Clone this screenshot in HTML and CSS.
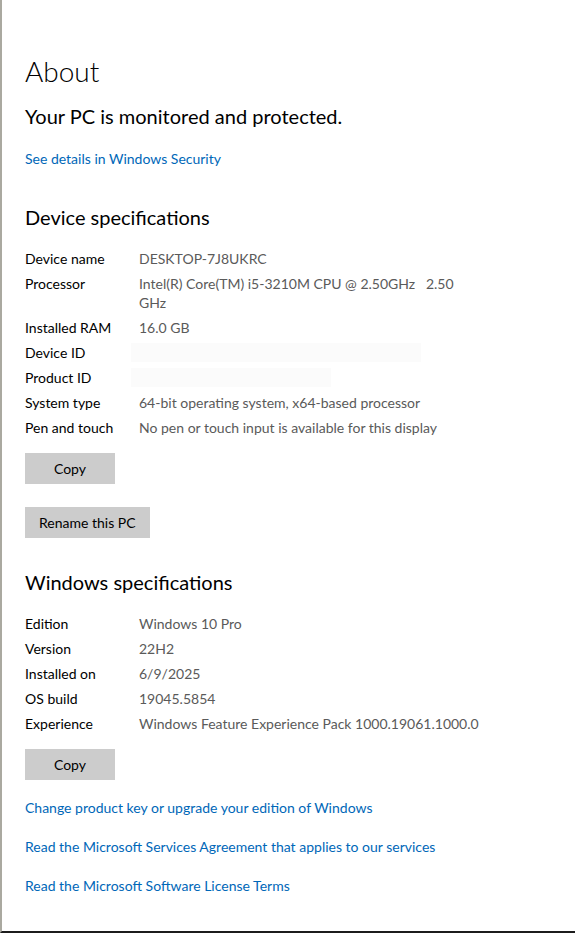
FILE: index.html
```html
<!DOCTYPE html>
<html lang="en">
<head>
    <meta charset="UTF-8">
    <meta name="viewport" content="width=device-width, initial-scale=1.0">
    <title>About</title>
    <link rel="stylesheet" href="styles.css">
</head>
<body>
    <div class="page">
        <h1 class="title">About</h1>
        <p class="status">Your PC is monitored and protected.</p>
        <a class="link first" href="#">See details in Windows Security</a>

        <h2 class="section">Device specifications</h2>
        <div class="specs">
            <div class="row"><span class="label">Device name</span><span class="value">DESKTOP-7J8UKRC</span></div>
            <div class="row"><span class="label">Processor</span><span class="value">Intel(R) Core(TM) i5-3210M CPU @ 2.50GHz&nbsp;&nbsp;&nbsp;2.50<br>GHz</span></div>
            <div class="row"><span class="label">Installed RAM</span><span class="value">16.0 GB</span></div>
            <div class="row"><span class="label">Device ID</span><span class="value"><span class="hidden wide"></span></span></div>
            <div class="row"><span class="label">Product ID</span><span class="value"><span class="hidden"></span></span></div>
            <div class="row"><span class="label">System type</span><span class="value">64-bit operating system, x64-based processor</span></div>
            <div class="row"><span class="label">Pen and touch</span><span class="value">No pen or touch input is available for this display</span></div>
        </div>
        <button class="btn copy">Copy</button>
        <button class="btn rename">Rename this PC</button>

        <h2 class="section win">Windows specifications</h2>
        <div class="specs">
            <div class="row"><span class="label">Edition</span><span class="value">Windows 10 Pro</span></div>
            <div class="row"><span class="label">Version</span><span class="value">22H2</span></div>
            <div class="row"><span class="label">Installed on</span><span class="value">6/9/2025</span></div>
            <div class="row"><span class="label">OS build</span><span class="value">19045.5854</span></div>
            <div class="row"><span class="label">Experience</span><span class="value">Windows Feature Experience Pack 1000.19061.1000.0</span></div>
        </div>
        <button class="btn copy">Copy</button>

        <div class="links">
            <a class="link" href="#">Change product key or upgrade your edition of Windows</a>
            <a class="link" href="#">Read the Microsoft Services Agreement that applies to our services</a>
            <a class="link" href="#">Read the Microsoft Software License Terms</a>
        </div>
    </div>
</body>
</html>
```

FILE: styles.css
```css
body{
    margin: 0;
    background: #fff;
    font-family: "Segoe UI", Lato, "Liberation Sans", sans-serif;
    color: #000;
}
.page{
    height: 933px;
    box-sizing: border-box;
    border-left: 2px solid #aaa9a0;
    border-bottom: 2px solid #1c1c1c;
    padding: 51px 0 0 23px;
    display: flex;
    flex-direction: column;
    align-items: flex-start;
}
.title{
    margin: 0;
    font-size: 28px;
    font-weight: 300;
    line-height: 40px;
}
.status{
    margin: 11px 0 0;
    font-size: 20px;
    line-height: 28px;
}
.link{
    font-size: 14px;
    line-height: 20px;
    color: #0067b8;
    text-decoration: none;
}
.link.first{
    margin-top: 19px;
}
.section{
    margin: 34px 0 0;
    font-size: 20px;
    font-weight: 400;
    line-height: 28px;
}
.section.win{
    margin-top: 30px;
}
.specs{
    margin-top: 18px;
    display: flex;
    flex-direction: column;
    gap: 6px;
}
.row{
    display: flex;
    font-size: 14px;
    line-height: 19px;
}
.label{
    width: 114px;
    flex: none;
}
.value{
    width: 340px;
    color: #5a5a5a;
}
.hidden{
    display: block;
    height: 19px;
    width: 200px;
    margin-left: -8px;
    background: #fbfbfb;
}
.hidden.wide{
    width: 290px;
}
.btn{
    margin-top: 16px;
    height: 31px;
    min-width: 90px;
    padding: 0 14px;
    border: none;
    background: #cccccc;
    font-family: inherit;
    font-size: 14px;
    color: #000;
}
.btn.rename{
    margin-top: 23px;
}
.links{
    margin-top: 18px;
    display: flex;
    flex-direction: column;
    gap: 19px;
}
```
